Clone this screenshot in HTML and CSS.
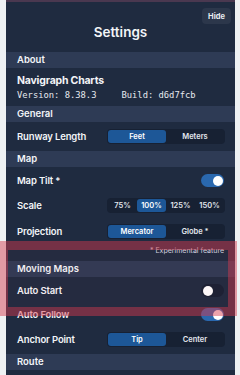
FILE: index.html
```html
<!DOCTYPE html>
<html lang="en">
<head>
    <meta charset="utf-8" />
    <meta name="viewport" content="width=device-width, initial-scale=1" />
    <title>Settings</title>
    <link rel="stylesheet" href="styles.css">
</head>
<body>
    <div class="panel">
        <div class="titlebar">
            <button class="hide-btn">Hide</button>
            <h1 class="title">Settings</h1>
        </div>

        <div class="section-head">About</div>
        <div class="about">
            <div class="app-name">Navigraph Charts</div>
            <div class="version"><span>Version: 8.38.3</span><span>Build: d6d7fcb</span></div>
        </div>

        <div class="section-head">General</div>
        <div class="section-body">
            <div class="row">
                <span class="label">Runway Length</span>
                <div class="seg">
                    <span class="seg-opt active">Feet</span>
                    <span class="seg-opt">Meters</span>
                </div>
            </div>
        </div>

        <div class="section-head">Map</div>
        <div class="section-body with-note">
            <div class="row">
                <span class="label">Map Tilt *</span>
                <span class="toggle on"><span class="knob"></span></span>
            </div>
            <div class="row">
                <span class="label">Scale</span>
                <div class="seg">
                    <span class="seg-opt">75%</span>
                    <span class="seg-opt active">100%</span>
                    <span class="seg-opt">125%</span>
                    <span class="seg-opt">150%</span>
                </div>
            </div>
            <div class="row">
                <span class="label">Projection</span>
                <div class="seg">
                    <span class="seg-opt active">Mercator</span>
                    <span class="seg-opt">Globe *</span>
                </div>
            </div>
            <div class="note">* Experimental feature</div>
        </div>

        <div class="section-head">Moving Maps</div>
        <div class="section-body">
            <div class="row">
                <span class="label">Auto Start</span>
                <span class="toggle"><span class="knob"></span></span>
            </div>
            <div class="row">
                <span class="label">Auto Follow</span>
                <span class="toggle on"><span class="knob"></span></span>
            </div>
            <div class="row">
                <span class="label">Anchor Point</span>
                <div class="seg">
                    <span class="seg-opt active">Tip</span>
                    <span class="seg-opt">Center</span>
                </div>
            </div>
        </div>

        <div class="section-head">Route</div>
    </div>

    <div class="highlight"></div>
</body>
</html>
```

FILE: styles.css
```css
body {
    margin: 0;
    height: 375px;
    overflow: hidden;
    position: relative;
    background-color: #eef1f3;
    font-family: Inter, "Noto Sans", sans-serif;
    color: #f3f5f8;
}
.panel {
    margin-left: 6px;
    width: 229px;
    height: 375px;
    background-color: #1f2b40;
    border-top: 2px solid #4a3850;
}
.titlebar {
    display: flex;
    flex-direction: column;
    padding: 6px 4px 12px;
}
.hide-btn {
    align-self: flex-end;
    width: 29px;
    height: 16px;
    padding: 0;
    border: none;
    border-radius: 4px;
    background-color: #2c374b;
    color: #e8ecf2;
    font-family: Inter, sans-serif;
    font-size: 7.5px;
    font-weight: 700;
}
.title {
    margin: 0;
    text-align: center;
    font-size: 13.5px;
    line-height: 16px;
    font-weight: 600;
}
.section-head {
    height: 16px;
    line-height: 16px;
    padding-left: 11px;
    background-color: #2e3b55;
    font-size: 9.5px;
    font-weight: 600;
}
.about {
    padding: 7px 11px 5px;
}
.app-name {
    font-size: 10.5px;
    line-height: 12px;
    font-weight: 700;
    letter-spacing: -0.2px;
}
.version {
    display: flex;
    gap: 25px;
    margin-top: 2px;
    font-family: "DejaVu Sans Mono", monospace;
    font-size: 8.8px;
    line-height: 12px;
    color: #e6e9ee;
}
.section-body {
    display: flex;
    flex-direction: column;
    gap: 11px;
    padding: 7px 10px 7px 11px;
}
.section-body.with-note {
    padding-bottom: 4px;
}
.row {
    display: flex;
    align-items: center;
    justify-content: space-between;
}
.label {
    font-size: 9.5px;
    font-weight: 600;
    line-height: 13px;
    letter-spacing: -0.15px;
}
.seg {
    display: flex;
    width: 116px;
    height: 13px;
    padding: 1px;
    border-radius: 4px;
    background-color: #172133;
}
.seg-opt {
    flex: 1;
    display: flex;
    align-items: center;
    justify-content: center;
    border-radius: 3px;
    font-size: 7.5px;
    font-weight: 600;
    color: #e3e7ee;
}
.seg-opt.active {
    background-color: #1d5797;
    color: #ffffff;
}
.toggle {
    position: relative;
    width: 23px;
    height: 13px;
    margin-right: 1px;
    border-radius: 7px;
    background-color: #172133;
}
.toggle.on {
    background-color: #2a68ae;
}
.knob {
    position: absolute;
    top: 1.5px;
    left: 1.5px;
    width: 10px;
    height: 10px;
    border-radius: 50%;
    background-color: #ffffff;
}
.toggle.on .knob {
    left: 11.5px;
}
.note {
    margin-top: -5px;
    text-align: right;
    padding-right: 1px;
    font-size: 7px;
    line-height: 12px;
    color: #d6dbe3;
}
.highlight {
    position: absolute;
    left: -1px;
    top: 241px;
    width: 220px;
    height: 57px;
    border: 9px solid rgba(214, 58, 78, 0.45);
    background-color: rgba(214, 58, 78, 0.04);
}
```
